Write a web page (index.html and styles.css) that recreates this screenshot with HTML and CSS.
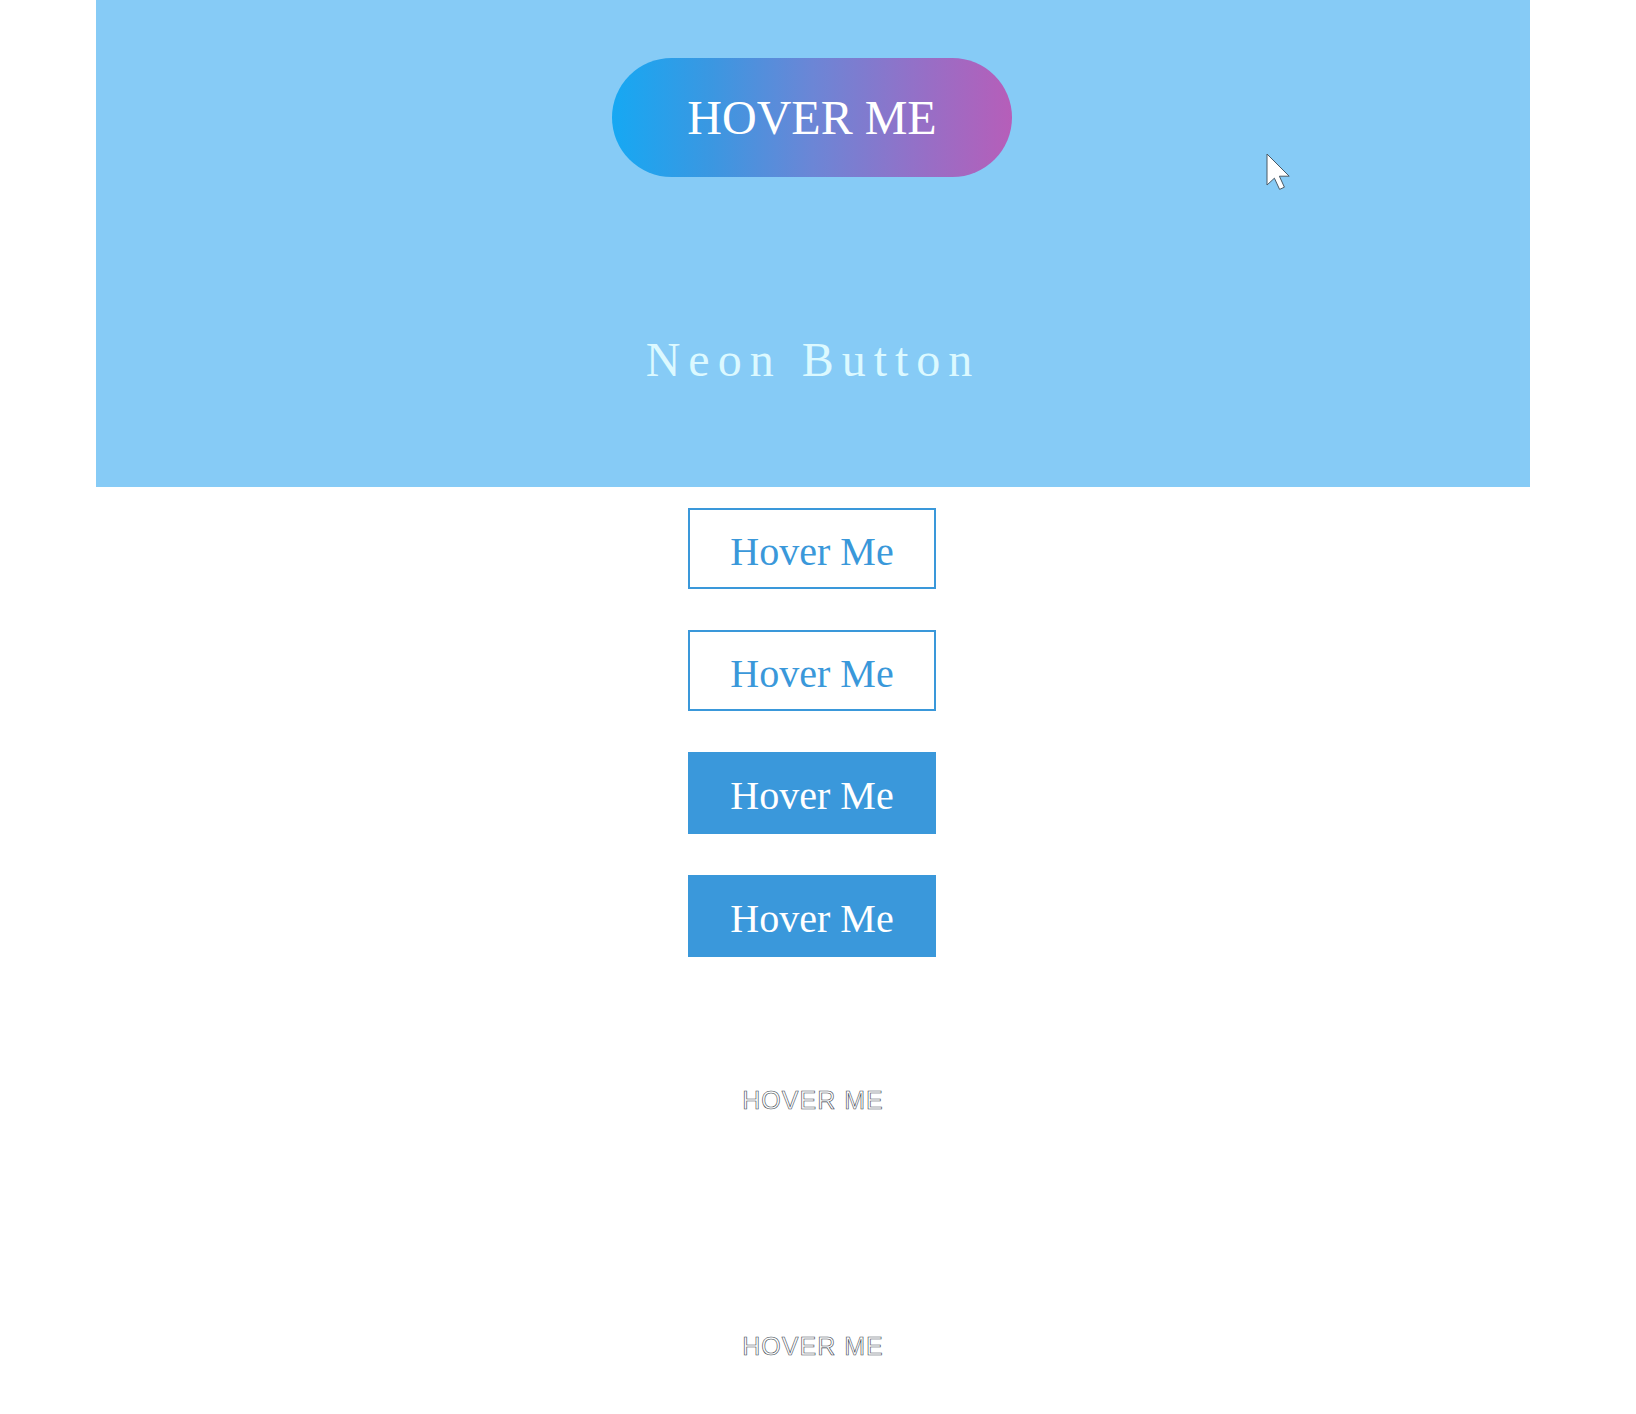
FILE: index.html
```html
<!DOCTYPE html>
<html lang="en">
<head>
<meta charset="utf-8">
<title>Hover Buttons</title>
<link rel="stylesheet" href="styles.css">
</head>
<body>
<div class="page">
  <section class="hero">
    <div class="pill">HOVER ME</div>
    <h1 class="neon">Neon Button</h1>
  </section>
  <div class="stack">
    <div class="btn outline">Hover Me</div>
    <div class="btn outline">Hover Me</div>
    <div class="btn filled">Hover Me</div>
    <div class="btn filled">Hover Me</div>
  </div>
  <div class="stroke-row first"><span class="stroke">HOVER ME</span></div>
  <div class="stroke-row second"><span class="stroke">HOVER ME</span></div>
</div>
<svg class="cursor" width="26" height="38" viewBox="0 0 13 19" aria-hidden="true">
  <path d="M0.5 0.5 L0.5 16 L4.2 12.6 L6.8 18.2 L9.2 17.1 L6.7 11.6 L11.6 11.6 Z" fill="#ffffff" stroke="#4a5a66" stroke-width="0.5" stroke-linejoin="round"/>
</svg>
</body>
</html>
```

FILE: styles.css
```css
html, body {
  margin: 0;
  padding: 0;
  background: #ffffff;
}

body {
  font-family: "Liberation Serif", "Times New Roman", serif;
  min-height: 1414px;
  position: relative;
}

.page {
  margin-left: 96px;
  width: 1434px;
}

.hero {
  height: 487px;
  box-sizing: border-box;
  padding-top: 58px;
  background: #86cbf6;
  display: flex;
  flex-direction: column;
  align-items: center;
}

.pill {
  width: 400px;
  height: 119px;
  margin-left: -2px;
  border-radius: 60px;
  background: linear-gradient(90deg, #16a8f3 0%, #3b97e1 25%, #6b86d6 50%, #9271c8 75%, #b65eb9 100%);
  color: #ffffff;
  font-size: 48px;
  line-height: 48px;
  display: flex;
  align-items: center;
  justify-content: center;
}

.neon {
  margin: 159px 0 0;
  font-weight: normal;
  font-size: 48px;
  line-height: 48px;
  letter-spacing: 8px;
  color: #dcf9ff;
}

.stack {
  padding-top: 21px;
  display: flex;
  flex-direction: column;
  align-items: center;
  gap: 41px;
}

.btn {
  width: 248px;
  margin-left: -2px;
  box-sizing: border-box;
  border: 2px solid #3a98da;
  padding: 22px 0 15px;
  font-size: 40px;
  line-height: 40px;
  text-align: center;
}

.outline {
  color: #3a98da;
  background: #ffffff;
}

.filled {
  color: #ffffff;
  background: #3a98db;
  padding-bottom: 16px;
}

.stroke-row {
  text-align: center;
  font-family: "Liberation Sans", Arial, sans-serif;
  font-size: 25px;
  line-height: 25px;
}

.stroke-row.first {
  margin-top: 131px;
}

.stroke-row.second {
  margin-top: 221px;
}

.stroke {
  letter-spacing: 1px;
  color: #ffffff;
  -webkit-text-stroke: 0.6px #3c4650;
}

.cursor {
  position: absolute;
  left: 1266px;
  top: 153px;
}
```
